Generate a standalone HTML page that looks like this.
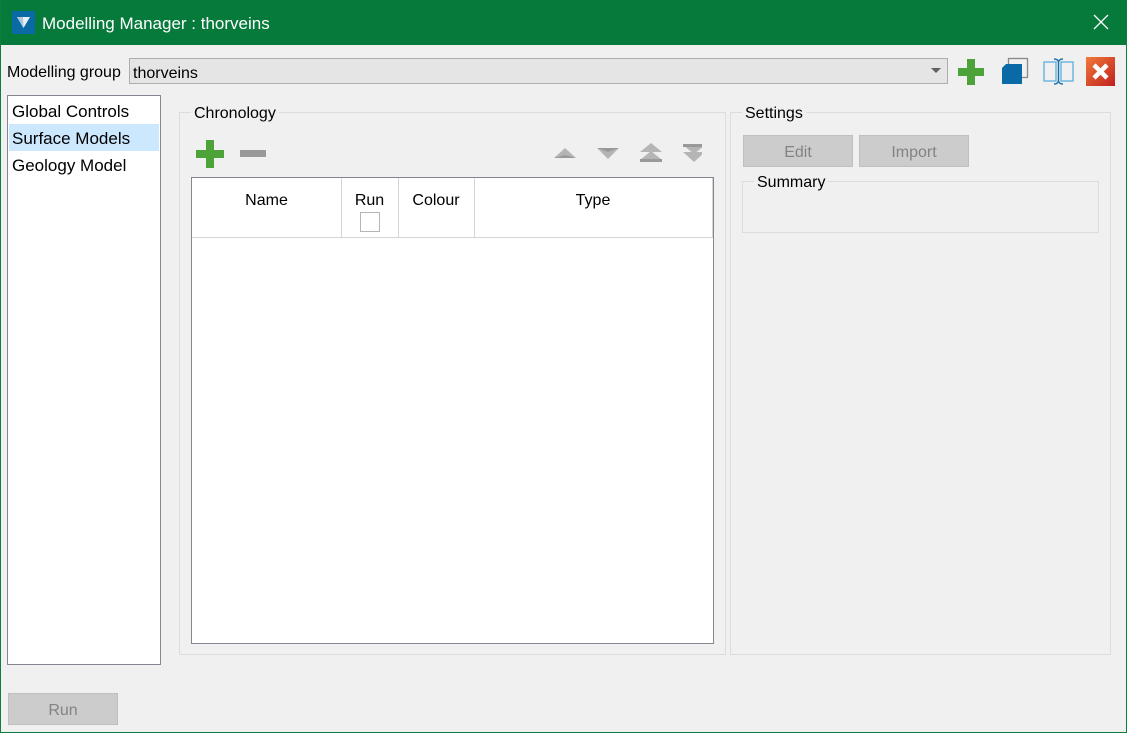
<!DOCTYPE html>
<html><head><meta charset="utf-8"><style>
*{margin:0;padding:0;box-sizing:border-box}
body{width:1127px;height:733px;overflow:hidden;background:#f0f0f0;font-family:"Liberation Sans",sans-serif;position:relative;color:#000}
.a{position:absolute}
#win{left:0;top:0;width:1127px;height:733px;border:1px solid #0e7e3e;border-top:none}
#title{left:0;top:0;width:1127px;height:45px;background:#067a3a;color:#fff;font-size:17px}
.t{font-size:16px;white-space:nowrap}
.btn{background:#cccccc;border:1px solid #bfbfbf;color:#838383;font-size:16px;text-align:center;line-height:33px}
.gb{border:1px solid #dcdcdc}
.gt{background:#f0f0f0;padding:0 3px;font-size:16px}
.col{border-left:1px solid #d5d5d5;top:0;height:59px}
.h{font-size:16px;top:14px;text-align:center}
</style></head><body>
<div id="title" class="a">
 <div class="a" style="left:12px;top:11px;width:23px;height:23px;background:#0a6aa5">
  <svg width="23" height="23"><polygon points="5,6 18,6 11.5,17" fill="#e8f0f6"/><polygon points="5,6 11,6 11.5,17" fill="#a9c8de"/></svg>
 </div>
 <div class="a" style="left:42px;top:14px">Modelling Manager : thorveins</div>
 <svg class="a" style="left:1093px;top:14px" width="16" height="16"><path d="M1 1L15 15M15 1L1 15" stroke="#fff" stroke-width="1.3"/></svg>
</div>
<div id="win" class="a"></div>
<div class="a t" style="left:7px;top:64px">Modelling group</div>
<div class="a" style="left:129px;top:58px;width:819px;height:26px;background:#e5e5e5;border:1px solid #adadad">
 <div class="a t" style="left:3px;top:6px">thorveins</div>
 <svg class="a" style="left:801px;top:9px" width="10" height="6"><polygon points="0,0 10,0 5,5" fill="#606060"/></svg>
</div>
<svg class="a" style="left:956px;top:57px" width="30" height="30"><rect x="11" y="2" width="8" height="26" fill="#4ea23a"/><rect x="2" y="11" width="26" height="8" fill="#4ea23a"/></svg>
<svg class="a" style="left:1000px;top:57px" width="30" height="30"><rect x="8.5" y="1.5" width="19" height="19" fill="none" stroke="#888" stroke-width="1.3"/><polygon points="6,7 22,7 22,27 2,27 2,11" fill="#0a6aa5"/></svg>
<svg class="a" style="left:1042px;top:57px" width="32" height="30"><rect x="2" y="5" width="12" height="19" fill="none" stroke="#5ab0dc" stroke-width="1.3"/><rect x="19" y="5" width="12" height="19" fill="none" stroke="#5ab0dc" stroke-width="1.3"/><path d="M12 2c3 0 4 1 4.5 3v19c.5 2 1.5 3 4.5 3M21 2c-3 0-4 1-4.5 3M16.5 24c-.5 2-1.5 3-4.5 3" fill="none" stroke="#1a6fa8" stroke-width="1.5"/></svg>
<svg class="a" style="left:1086px;top:57px" width="29" height="29"><defs><linearGradient id="g" x1="0" y1="0" x2="1" y2="1"><stop offset="0" stop-color="#f07a3a"/><stop offset="1" stop-color="#c0201e"/></linearGradient></defs><rect x="0" y="0" width="29" height="29" fill="url(#g)"/><path d="M8 8L21 21M21 8L8 21" stroke="#fff" stroke-width="4.5"/></svg>

<div class="a" style="left:7px;top:95px;width:154px;height:570px;background:#fff;border:1px solid #828790">
 <div class="a" style="left:1px;top:28px;width:150px;height:27px;background:#cce8ff"></div>
 <div class="a" style="left:4px;top:6px;font-size:17px">Global Controls</div>
 <div class="a" style="left:4px;top:33px;font-size:17px">Surface Models</div>
 <div class="a" style="left:4px;top:60px;font-size:17px">Geology Model</div>
</div>

<div class="a gb" style="left:179px;top:112px;width:547px;height:543px"></div>
<div class="a gt" style="left:191px;top:105px">Chronology</div>
<svg class="a" style="left:195px;top:139px" width="30" height="30"><rect x="11" y="1" width="8" height="28" fill="#4ea23a"/><rect x="1" y="11" width="28" height="8" fill="#4ea23a"/></svg>
<div class="a" style="left:240px;top:150px;width:26px;height:7px;background:#999"></div>
<svg class="a" style="left:552px;top:142px" width="150" height="24">
 <polygon points="2,16 24,16 13,6" fill="#b5b5b5"/><polygon points="2,16 24,16 13,13" fill="#999"/>
 <polygon points="45,6 67,6 56,17" fill="#b5b5b5"/><polygon points="45,6 67,6 56,10" fill="#999"/>
 <polygon points="88,10 110,10 99,1" fill="#b5b5b5"/><polygon points="88,18 110,18 99,9" fill="#b5b5b5"/><rect x="88" y="17" width="22" height="3" fill="#999"/>
 <polygon points="131,3 153,3 142,12" fill="#b5b5b5"/><polygon points="131,10 153,10 142,20" fill="#b5b5b5"/><rect x="131" y="2" width="22" height="3" fill="#999"/>
</svg>
<div class="a" style="left:191px;top:177px;width:523px;height:467px;background:#fff;border:1px solid #828790">
 <div class="a" style="left:0;top:59px;width:521px;border-top:1px solid #d5d5d5"></div>
 <div class="a col" style="left:149px"></div>
 <div class="a col" style="left:206px"></div>
 <div class="a col" style="left:282px"></div>
 <div class="a col" style="left:520px"></div>
 <div class="a h" style="left:0;width:149px">Name</div>
 <div class="a h" style="left:149px;width:57px">Run</div>
 <div class="a" style="left:168px;top:34px;width:20px;height:20px;border:1px solid #b5b5b5"></div>
 <div class="a h" style="left:206px;width:76px">Colour</div>
 <div class="a h" style="left:282px;width:238px">Type</div>
</div>

<div class="a gb" style="left:730px;top:112px;width:381px;height:543px"></div>
<div class="a gt" style="left:742px;top:105px">Settings</div>
<div class="a btn" style="left:743px;top:135px;width:110px;height:32px">Edit</div>
<div class="a btn" style="left:859px;top:135px;width:110px;height:32px">Import</div>
<div class="a gb" style="left:742px;top:181px;width:357px;height:52px"></div>
<div class="a gt" style="left:754px;top:174px">Summary</div>

<div class="a btn" style="left:8px;top:693px;width:110px;height:32px">Run</div>
</body></html>
